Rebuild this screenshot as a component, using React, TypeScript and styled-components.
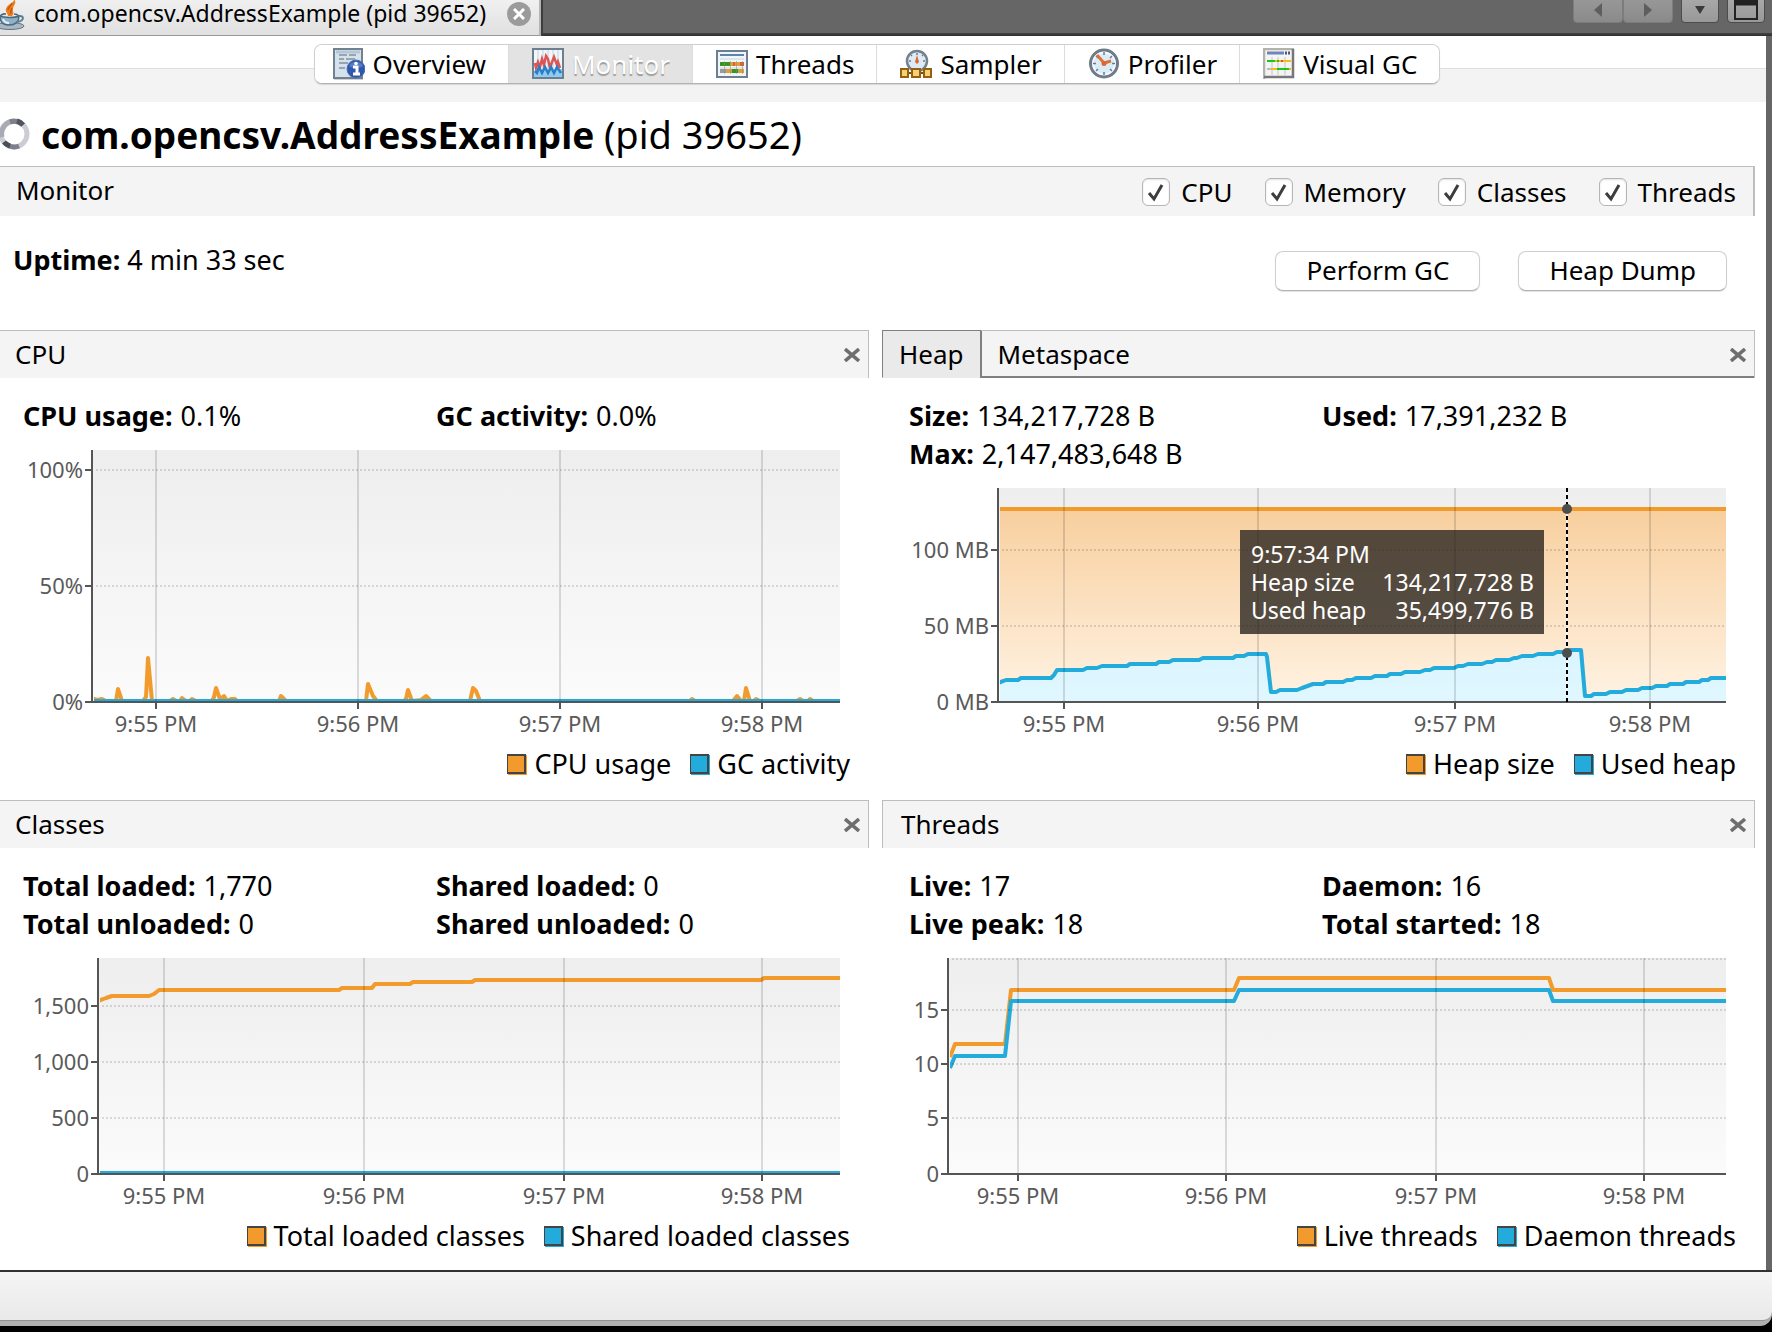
import React, { useId, useLayoutEffect, useRef, useState } from 'react';
import styled, { createGlobalStyle, css } from 'styled-components';

const ORANGE = '#f29b2c';
const BLUE = '#22abdb';
const FONT = '"Noto Sans", "Open Sans", "DejaVu Sans", sans-serif';

const GlobalStyle = createGlobalStyle`
  *, *::before, *::after { box-sizing: border-box; }
  body {
    margin: 0;
    background: #000;
    color: #000;
    font-family: ${FONT};
    font-size: 26px;
    line-height: 36px;
  }
  button, input { font: inherit; color: inherit; margin: 0; }
`;

/* ---------- window frame ---------- */

const Window = styled.div`
  display: flex;
  flex-direction: column;
  min-height: 100vh;
  overflow: hidden;
`;

const DocumentBar = styled.div`
  display: flex;
  justify-content: space-between;
  height: 36px;
  background: linear-gradient(#666 33px, #444 33px, #2e2e2e);
`;

const DocumentTab = styled.div`
  display: flex;
  align-items: center;
  gap: 9px;
  padding: 0 8px 8px 0;
  background: linear-gradient(#f0f0f0, #e0e0e0);
  border-right: 2px solid #b4b4b4;
  border-bottom: 1px solid #999;
  box-shadow: 2px 0 0 #3c3c3c;
  font-size: 23px;
  line-height: 27px;
  white-space: nowrap;

  > svg { margin-left: -8px; }
`;

const TabClose = styled.button`
  display: grid;
  place-items: center;
  width: 24px;
  height: 24px;
  margin-left: 12px;
  padding: 0;
  border: 0;
  border-radius: 50%;
  background: #9b9b9b;
`;

const WindowButtons = styled.div`
  display: flex;
  gap: 8px;
  margin-top: -4px;
  padding-right: 7px;
`;

const ButtonPair = styled.div`
  display: flex;
`;

const FrameButton = styled.button<{ $wide?: boolean }>`
  display: grid;
  place-items: center;
  width: ${p => (p.$wide ? 50 : 38)}px;
  height: 27px;
  padding: 0;
  border: 1px solid ${p => (p.$wide ? '#7c7c7c' : '#4c4c4c')};
  border-radius: 0 0 4px 4px;
  background: ${p => (p.$wide ? 'linear-gradient(#999, #8a8a8a)' : 'linear-gradient(#aaa, #989898)')};
`;

const Content = styled.div`
  flex: 1 0 auto;
  background: #fff;
  border-right: 6px solid #666;
`;

/* ---------- view tabs ---------- */

const TabStrip = styled.nav`
  display: flex;
  justify-content: center;
  height: 66px;
  padding: 8px 0 18px;
  background: linear-gradient(#fff 32px, #dedede 32px, #dedede 33px, #f3f3f3 33px);
`;

const Segments = styled.div`
  display: flex;
  height: 40px;
  margin-right: 12px;
  border: 1px solid #cfcfcf;
  border-bottom-color: #b2b2b2;
  border-radius: 8px;
  background: #fff;
  box-shadow: 0 1px 1px rgba(0, 0, 0, 0.12);
  overflow: hidden;
`;

const Segment = styled.button<{ $active?: boolean }>`
  display: flex;
  align-items: center;
  gap: 8px;
  padding: 0 22px 0 23px;
  border: 0;
  border-right: 1px solid #dcdcdc;
  background: #fff;
  white-space: nowrap;

  &:first-child { padding-left: 18px; }
  &:last-child { padding-right: 22px; border-right: 0; }

  ${p => p.$active && css`
    background: #e3e3e3;
    color: #fff;
    text-shadow: 0 2px 1px #999;
  `}
`;

/* ---------- application view ---------- */

const View = styled.main`
  margin: 0 11px 0 -4px;
  padding-bottom: 16px;
`;

const Heading = styled.h1`
  display: flex;
  align-items: center;
  gap: 11px;
  height: 64px;
  margin: 0;
  padding-left: 2px;
  font-size: 37px;
  line-height: 50px;
  white-space: pre;
`;

const Light = styled.span`
  font-size: 38px;
  font-weight: 400;
`;

const SectionBar = styled.div`
  display: flex;
  align-items: center;
  justify-content: space-between;
  height: 50px;
  padding: 0 17px 0 20px;
  border-top: 1px solid #bdbdbd;
  border-right: 2px solid #bdbdbd;
  background: #f4f4f4;
`;

const BarTitle = styled.h2`
  margin: 0;
  padding-bottom: 3px;
  font-size: 26px;
  font-weight: 400;
  line-height: 36px;
`;

const Checks = styled.div`
  display: flex;
  gap: 32px;
`;

const CheckLabel = styled.label`
  display: flex;
  align-items: center;
  gap: 11px;
`;

const CheckCell = styled.span`
  display: grid;
  place-items: center;

  > * { grid-area: 1 / 1; }
  > svg { pointer-events: none; visibility: hidden; }
  > input:checked + svg { visibility: visible; }
`;

const CheckInput = styled.input`
  appearance: none;
  width: 28px;
  height: 28px;
  border: 1px solid #b5b5b5;
  border-radius: 6px;
  background: #fff;
  box-shadow: inset 0 1px 2px rgba(0, 0, 0, 0.12);
`;

const ActionRow = styled.div`
  display: flex;
  align-items: flex-start;
  justify-content: space-between;
  padding: 25px 28px 39px 17px;
`;

const Fact = styled.div`
  font-size: 27px;
  line-height: 38px;
  white-space: nowrap;
`;

const Actions = styled.div`
  display: flex;
  gap: 38px;
  padding-top: 10px;
`;

const PushButton = styled.button`
  height: 40px;
  padding: 0 30px 2px;
  border: 1px solid #cfcfcf;
  border-bottom-color: #b2b2b2;
  border-radius: 8px;
  background: #fff;
  box-shadow: 0 1px 1px rgba(0, 0, 0, 0.12);
  line-height: 36px;
`;

const PanelGrid = styled.div`
  display: grid;
  grid-template-columns: repeat(2, minmax(0, 1fr));
  gap: 18px 13px;
`;

/* ---------- panels ---------- */

const Panel = styled.section`
  display: flex;
  flex-direction: column;
`;

const PanelHeader = styled.header`
  display: flex;
  align-items: stretch;
  height: 48px;
  border: 1px solid #bdbdbd;
  border-bottom: 0;
  background: #f4f4f4;
`;

const PanelTitle = styled.h2`
  display: flex;
  align-items: center;
  flex: 1;
  margin: 0;
  padding: 0 0 2px 18px;
  font-size: 26px;
  font-weight: 400;
`;

const PanelTab = styled.button<{ $active?: boolean }>`
  padding: 0 16px;
  border: 0;
  border-bottom: 2px solid #808080;
  background: transparent;

  ${p => p.$active && css`
    border-bottom: 0;
    padding-bottom: 2px;
    background: #eaeaea;
    box-shadow: -1px -1px 0 #808080;
    border-right: 2px solid #808080;
  `}
`;

const Filler = styled.div`
  flex: 1;
  border-bottom: 2px solid #808080;
`;

const PanelClose = styled.button<{ $ruled?: boolean }>`
  display: grid;
  place-items: center;
  width: 32px;
  padding: ${p => (p.$ruled ? '3px 0 0' : '1px 0 0')};
  border: 0;
  border-bottom: ${p => (p.$ruled ? '2px solid #808080' : '0')};
  background: transparent;
`;

const Stats = styled.dl`
  display: grid;
  grid-template-columns: repeat(2, minmax(0, 1fr));
  margin: 0;
  padding: 19px 20px 15px 27px;
  font-size: 27px;
  line-height: 38px;
`;

const Stat = styled.div`
  display: flex;
  gap: 8px;
  white-space: nowrap;

  dt { font-weight: 700; }
  dd { margin: 0; }
`;

const ChartBox = styled.div`
  position: relative;
  margin-right: 29px;

  > svg { display: block; width: 100%; overflow: visible; }
  text { font-size: 22px; fill: #5a5a5a; }
`;

const Tooltip = styled.div`
  position: absolute;
  width: 304px;
  padding: 10px 10px 10px 11px;
  background: rgba(32, 28, 24, 0.76);
  color: #fff;
  font-size: 23px;
  line-height: 28px;
`;

const TooltipRow = styled.div`
  display: flex;
  justify-content: space-between;
`;

const Legend = styled.ul`
  display: flex;
  justify-content: flex-end;
  gap: 19px;
  margin: 0;
  padding: 8px 19px 0 0;
  font-size: 27px;
  list-style: none;
`;

const LegendItem = styled.li`
  display: flex;
  align-items: center;
  gap: 8px;
`;

const Swatch = styled.span<{ $color: string }>`
  width: 19px;
  height: 20px;
  border: 2px solid #444;
  border-left-width: 1px;
  background: ${p => p.$color};
  box-shadow: 1px 1px 0 ${p => p.$color};
`;

/* ---------- status bar ---------- */

const StatusShell = styled.footer`
  height: 56px;
  margin-bottom: 6px;
  border-top: 2px solid #333;
  border-radius: 0 0 12px 0;
  background: linear-gradient(#666 40px, #b0b0b0 40px);
`;

const StatusBar = styled.div`
  height: 49px;
  border-bottom: 1px solid #909090;
  border-radius: 0 0 9px 0;
  background: linear-gradient(#f5f5f5, #e9e9e9);
`;

/* ---------- charts ---------- */

type Point = [number, number];

interface ChartSpec {
  axis: number;
  span: number;
  height: number;
  yTicks: [string, number][];
  xTicks: number[];
  series: { color: string; points: Point[]; area?: [string, string] }[];
  marker?: { x: number; ys: number[] };
}

const TIMES = ['9:55 PM', '9:56 PM', '9:57 PM', '9:58 PM'];

function Chart({ spec, label, children }: {
  spec: ChartSpec;
  label: string;
  children?: (markerX: number) => React.ReactNode;
}) {
  const box = useRef<HTMLDivElement>(null);
  const [width, setWidth] = useState(spec.axis + spec.span);
  const id = useId().replace(/:/g, '');

  useLayoutEffect(() => {
    const el = box.current;
    if (!el) return;
    const update = () => setWidth(el.clientWidth);
    update();
    const observer = new ResizeObserver(update);
    observer.observe(el);
    return () => observer.disconnect();
  }, []);

  const { axis, span, height: h } = spec;
  const x = (v: number) => axis + (v * (width - axis)) / span;
  const trace = (pts: Point[]) => pts.map(([px, py]) => `${x(px)},${py}`).join(' ');

  return (
    <ChartBox ref={box}>
      <svg height={h + 36} role="img" aria-label={label}>
        <defs>
          <linearGradient id={`${id}bg`} x1="0" y1="0" x2="0" y2="1">
            <stop offset="0" stopColor="#eee" />
            <stop offset="1" stopColor="#fbfbfb" />
          </linearGradient>
          {spec.series.map((s, i) => s.area && (
            <linearGradient key={i} id={`${id}a${i}`} gradientUnits="userSpaceOnUse" x1="0" y1="0" x2="0" y2={h}>
              <stop offset="0" stopColor={s.area[0]} />
              <stop offset="1" stopColor={s.area[1]} />
            </linearGradient>
          ))}
          <clipPath id={`${id}c`}>
            <rect x={axis + 2} y="0" width={Math.max(0, width - axis - 2)} height={h} />
          </clipPath>
        </defs>
        <rect x={axis} y="0" width={Math.max(0, width - axis)} height={h} fill={`url(#${id}bg)`} />
        <g clipPath={`url(#${id}c)`}>
          {spec.series.map((s, i) => (
            <g key={i}>
              {s.area && (
                <polygon
                  points={`${x(s.points[0][0])},${h} ${trace(s.points)} ${x(span)},${h}`}
                  fill={`url(#${id}a${i})`}
                />
              )}
              <polyline points={trace(s.points)} fill="none" stroke={s.color} strokeWidth="4" strokeLinejoin="round" />
            </g>
          ))}
          {spec.yTicks.filter(([, y]) => y < h).map(([name, y]) => (
            <line key={name} x1={axis} x2={width} y1={y} y2={y} stroke="#000" strokeOpacity="0.13" strokeWidth="2" strokeDasharray="2 2" />
          ))}
          {spec.xTicks.map(t => (
            <line key={t} x1={x(t)} x2={x(t)} y1="0" y2={h} stroke="#000" strokeOpacity="0.13" strokeWidth="2" />
          ))}
        </g>
        <path d={`M${axis} 0V${h}H${width}`} fill="none" stroke="#555" strokeWidth="2" />
        {spec.yTicks.filter(([name]) => name.trim()).map(([name, y]) => (
          <g key={name}>
            <line x1={axis - 7} x2={axis} y1={y} y2={y} stroke="#555" strokeWidth="2" />
            <text x={axis - 9} y={y + 8} textAnchor="end">{name}</text>
          </g>
        ))}
        {spec.xTicks.map((t, i) => (
          <g key={t}>
            <line x1={x(t)} x2={x(t)} y1={h} y2={h + 7} stroke="#555" strokeWidth="2" />
            <text x={x(t)} y={h + 30} textAnchor="middle">{TIMES[i]}</text>
          </g>
        ))}
        {spec.marker && (
          <g>
            <line x1={x(spec.marker.x)} x2={x(spec.marker.x)} y1="0" y2={h} stroke="#fff" strokeWidth="2" strokeOpacity="0.7" />
            <line x1={x(spec.marker.x)} x2={x(spec.marker.x)} y1="0" y2={h} stroke="#000" strokeWidth="2" strokeDasharray="4 3" />
            {spec.marker.ys.map(y => (
              <circle key={y} cx={x(spec.marker!.x)} cy={y} r="5" fill="#4d4d4d" />
            ))}
          </g>
        )}
      </svg>
      {spec.marker && children?.(x(spec.marker.x))}
    </ChartBox>
  );
}

/* Each spike is drawn from [offset, height above the base line]. */
const cpuSpikes: Point[] = [
  [0, 0], [2, 2], [5, 1], [10, 2], [14, 0], [24, 0], [26, 12], [30, 0], [51, 0], [54, 4], [56, 43], [60, 0],
  [78, 0], [81, 2], [84, 0], [88, 0], [90, 3], [94, 0], [98, 0], [100, 2], [104, 0], [120, 0], [122, 4],
  [124, 13], [128, 2], [132, 5], [135, 0], [139, 2], [143, 2], [145, 0], [187, 0], [189, 5], [194, 0],
  [274, 0], [276, 17], [281, 5], [285, 0], [312, 0], [314, 2], [316, 11], [320, 0], [329, 1], [334, 5],
  [339, 0], [378, 0], [381, 13], [384, 10], [388, 0], [598, 0], [600, 2], [603, 0], [641, 0], [645, 5],
  [649, 0], [652, 0], [654, 13], [658, 0], [662, 0], [664, 2], [668, 0], [705, 0], [708, 2], [711, 0],
  [716, 0], [718, 2], [721, 0], [748, 0],
];

const cpuChart: ChartSpec = {
  axis: 96, span: 748, height: 252,
  yTicks: [['100%', 20], ['50%', 136], ['0%', 252]],
  xTicks: [64, 266, 468, 670],
  series: [
    { color: ORANGE, points: cpuSpikes.map(([px, v]): Point => [px, 251 - v]) },
    { color: BLUE, points: [[0, 251], [748, 251]] },
  ],
};

const heapChart: ChartSpec = {
  axis: 116, span: 728, height: 214,
  yTicks: [['100 MB', 62], ['50 MB', 138], ['0 MB', 214]],
  xTicks: [66, 260, 457, 652],
  series: [
    { color: ORANGE, area: ['#f7cb96', '#fff3e4'], points: [[0, 21], [728, 21]] },
    {
      color: BLUE, area: ['#c8edfb', '#e0f7ff'],
      points: [
        [0, 195], [8, 192], [20, 192], [23, 190], [53, 190], [56, 187], [59, 182], [85, 182], [89, 180],
        [99, 180], [104, 178], [129, 178], [132, 176], [158, 176], [161, 174], [171, 174], [175, 172],
        [201, 172], [205, 170], [235, 170], [238, 168], [246, 168], [250, 166], [268, 166], [269, 169],
        [273, 204], [278, 204], [282, 202], [299, 202], [304, 200], [315, 196], [325, 196], [328, 194],
        [345, 194], [349, 192], [354, 192], [358, 190], [373, 190], [377, 188], [389, 188], [392, 186],
        [403, 186], [407, 184], [422, 184], [427, 182], [432, 182], [436, 180], [456, 180], [460, 178],
        [465, 178], [470, 176], [484, 176], [489, 174], [494, 174], [498, 172], [511, 172], [516, 170],
        [519, 170], [524, 168], [535, 168], [540, 166], [555, 166], [559, 164], [568, 164], [572, 162],
        [583, 162], [587, 208], [593, 208], [596, 206], [608, 206], [612, 204], [624, 204], [628, 202],
        [640, 202], [644, 200], [654, 200], [658, 198], [669, 198], [672, 196], [685, 196], [688, 194],
        [701, 194], [704, 192], [710, 192], [713, 190], [728, 190],
      ],
    },
  ],
  marker: { x: 569, ys: [21, 165] },
};

const classesChart: ChartSpec = {
  axis: 102, span: 742, height: 216,
  yTicks: [['1,500', 48], ['1,000', 104], ['500', 160], ['0', 216]],
  xTicks: [66, 266, 466, 664],
  series: [
    {
      color: ORANGE,
      points: [
        [0, 43], [8, 40], [14, 38], [51, 38], [56, 36], [61, 32], [241, 32], [244, 30], [274, 30], [277, 26],
        [312, 26], [315, 24], [374, 24], [377, 22], [663, 22], [666, 20], [742, 20],
      ],
    },
    { color: BLUE, points: [[0, 215], [742, 215]] },
  ],
};

const threadsChart: ChartSpec = {
  axis: 66, span: 778, height: 216,
  yTicks: [[' ', 1], ['15', 52], ['10', 106], ['5', 160], ['0', 216]],
  xTicks: [70, 278, 488, 696],
  series: [
    {
      color: ORANGE,
      points: [[2, 99], [7, 86], [57, 86], [63, 32], [286, 32], [291, 20], [601, 20], [605, 32], [778, 32]],
    },
    {
      color: BLUE,
      points: [[2, 110], [7, 98], [57, 98], [63, 43], [286, 43], [291, 32], [601, 32], [605, 43], [778, 43]],
    },
  ],
};

/* ---------- icons ---------- */

const JavaIcon = () => (
  <svg width="33" height="32" viewBox="0 0 33 32" aria-hidden="true">
    <path d="M22 1c1 4-7 5-8 10-1 3 2 4 2 7h4c3-3 0-5 1-8 1-3 4-5 1-9z" fill="#ee7d1a" />
    <path d="M20 5c-1 3-4 4-4 7M20 10c-1 2-2 3-1 6" stroke="#c9560a" strokeWidth="1.500" fill="none" />
    <ellipse cx="18" cy="28" rx="14" ry="3.500" fill="#a9b8c4" stroke="#5f7485" />
    <path d="M8 18c0 7 3 9 9 9s10-2 10-9c-4 2-15 2-19 0z" fill="#8fb0c6" stroke="#4d687b" strokeWidth="1.500" />
    <path d="M11 21c1 3 3 4 6 4" stroke="#e4f0f7" strokeWidth="2" fill="none" />
    <path d="M27 18c5-1 6 5-2 6" stroke="#5c7c92" strokeWidth="2" fill="none" />
    <path d="M8 18c3-3 5-2 6-2M22 16c3 0 4 1 5 2" stroke="#4d687b" strokeWidth="1.500" fill="none" />
  </svg>
);

const OverviewIcon = () => (
  <svg width="32" height="32" viewBox="0 0 32 32" aria-hidden="true">
    <path d="M1 31.500h29" stroke="#d0d0d0" />
    <rect x="1" y="1" width="28" height="29" fill="#d5e2ed" stroke="#71818f" strokeWidth="2" />
    <path d="M3 4h24" stroke="#b4c6d6" strokeWidth="3" />
    <path d="M6 7h8M16 7h7M6 11h5M13 11h9M6 15h9M6 20h6" stroke="#97a5b1" strokeWidth="2" />
    <circle cx="23" cy="21" r="9" fill="#2f57ac" stroke="#4a6dbb" />
    <path d="M16 18a8 8 0 0 1 14 0c-4 3-10 3-14 0z" fill="#6f93d6" opacity=".6" />
    <path d="M20 19h4v7M20 26h7" stroke="#fff" strokeWidth="3" fill="none" />
    <circle cx="23" cy="15.500" r="1.800" fill="#fff" />
  </svg>
);

const MonitorIcon = () => (
  <svg width="32" height="32" viewBox="0 0 32 32" aria-hidden="true">
    <rect x="1" y="1" width="30" height="29" fill="#f2f6f9" stroke="#6c7f90" strokeWidth="2" />
    <path d="M6 2v27M11 2v27M16 2v27M21 2v27M26 2v27" stroke="#c4d2de" />
    <path d="M2 29v-6l3 1 2-4 3 5 3-7 3 6 3-7 3 7 3-3 5 0v8z" fill="#8fcbf2" />
    <path d="M3 15l1 5 2-6 2 5 2-8 2 6 2-9 2 3 2 9 2-6 2-5 3 8 1-3 2 6" stroke="#dc5656" strokeWidth="2.500" fill="none" />
    <path d="M3 23l2 2 2-6 3 6 3-6 3 6 3-6 3 6 3-6 4 6" stroke="#2b7fc4" strokeWidth="2.500" fill="none" />
  </svg>
);

const ThreadsIcon = () => (
  <svg width="32" height="32" viewBox="0 0 32 32" aria-hidden="true">
    <rect x="1" y="3" width="30" height="26" fill="#f1f5f8" stroke="#6c7f90" strokeWidth="2" />
    <path d="M4 7h24" stroke="#5d86ad" strokeWidth="2" />
    <path d="M4 11h24M4 20h24" stroke="#dde5ec" strokeWidth="2" />
    <path d="M4 16h14" stroke="#3a9422" strokeWidth="4" />
    <path d="M14 16h3M19 16h5" stroke="#d9a23c" strokeWidth="4" />
    <path d="M17 16h2M24 16h4" stroke="#d8603a" strokeWidth="4" />
    <path d="M4 23h6" stroke="#9a9a9a" strokeWidth="4" />
    <path d="M10 23h6M22 23h6" stroke="#d9a23c" strokeWidth="4" />
    <path d="M16 23h6" stroke="#3a9422" strokeWidth="4" />
    <path d="M8.500 13v13M14.500 13v13M20.500 13v13M26.500 13v13" stroke="#8b8b74" strokeOpacity=".5" />
  </svg>
);

const SamplerIcon = () => (
  <svg width="32" height="32" viewBox="0 0 32 32" aria-hidden="true">
    <circle cx="17" cy="13" r="10" fill="#dcebf5" stroke="#75828e" strokeWidth="2.500" />
    <path d="M17 5v2M9 13h2M23 13h2M11 7l1 1M23 7l-1 1" stroke="#6d7a86" strokeWidth="1.500" />
    <path d="M17 7l2 7-2 2-2-2z" fill="#e0662f" />
    <path d="M7 25h18" stroke="#7a4f10" strokeWidth="2" />
    <g fill="#f6cf77" stroke="#94610f" strokeWidth="2">
      <rect x="1" y="21" width="7" height="8" />
      <rect x="12" y="21" width="8" height="8" />
      <rect x="24" y="21" width="7" height="8" />
    </g>
  </svg>
);

const ProfilerIcon = () => (
  <svg width="32" height="32" viewBox="0 0 32 32" aria-hidden="true">
    <circle cx="16" cy="15.500" r="13.500" fill="#dcebf8" stroke="#6e7b89" strokeWidth="3" />
    <circle cx="16" cy="15.500" r="11" fill="none" stroke="#fff" strokeWidth="1.500" opacity=".8" />
    <path d="M16 4v3M16 24v3M5 15.500h3M24 15.500h3M8 8l2 2M24 8l-2 2M8 23l2-2M24 23l-2-2" stroke="#6b7c8e" strokeWidth="1.500" />
    <path d="M9 7l7 8 7-2" stroke="#e0703a" strokeWidth="3" fill="none" />
    <circle cx="16" cy="15.500" r="2.500" fill="#e0662f" />
  </svg>
);

const VisualGcIcon = () => (
  <svg width="32" height="32" viewBox="0 0 32 32" aria-hidden="true">
    <rect x="1" y="1" width="30" height="29" fill="#f4f4f4" />
    <path d="M1 31V1h30" stroke="#b3b3a9" strokeWidth="2.500" fill="none" />
    <path d="M1 29h29V1" stroke="#777" strokeWidth="2.500" fill="none" />
    <path d="M4 5h17" stroke="#6c86bd" strokeWidth="3" />
    <path d="M22 5h6" stroke="#4c5a75" strokeWidth="3" strokeDasharray="2 1" />
    <path d="M9 9v18M15 9v18M22 9v18" stroke="#d6d6d6" strokeWidth="1.500" />
    <path d="M4 13h12" stroke="#1ec41e" strokeWidth="2" />
    <path d="M12 13h2M16 13h2M20 13h8" stroke="#f5bd16" strokeWidth="2" />
    <path d="M18 13h2" stroke="#e3502a" strokeWidth="2" />
    <path d="M4 21h4" stroke="#bbb" strokeWidth="2" />
    <path d="M8 21h6M26 21h2" stroke="#f5bd16" strokeWidth="2" />
    <path d="M14 21h12" stroke="#1ec41e" strokeWidth="2" />
  </svg>
);

const Spinner = () => (
  <svg width="32" height="32" viewBox="0 0 32 32" aria-hidden="true" fill="none" strokeWidth="5">
    <circle cx="16" cy="16" r="13" stroke="#cbccd4" />
    <path d="M4 19a13 13 0 0 1 12-16" stroke="#a9aab4" />
    <path d="M12 4a13 13 0 0 1 13 3" stroke="#7d7f8a" />
    <path d="M19 3a13 13 0 0 1 6 4" stroke="#52545f" />
    <path d="M21 28a13 13 0 0 1-14-3" stroke="#7d7f8a" />
    <path d="M12 28a13 13 0 0 1-6-4" stroke="#4b4d58" />
  </svg>
);

const CheckMark = () => (
  <svg width="20" height="20" viewBox="0 0 20 20" aria-hidden="true">
    <path d="M3 11l5 6 8-14" fill="none" stroke="#3d3d3d" strokeWidth="3" />
  </svg>
);

const CrossIcon = () => (
  <svg width="16" height="14" viewBox="0 0 16 14" aria-hidden="true">
    <path d="M1 1l14 12M15 1L1 13" stroke="#6e6e6e" strokeWidth="3.500" />
  </svg>
);

/* ---------- composed parts ---------- */

const views = [
  { name: 'Overview', Icon: OverviewIcon },
  { name: 'Monitor', Icon: MonitorIcon },
  { name: 'Threads', Icon: ThreadsIcon },
  { name: 'Sampler', Icon: SamplerIcon },
  { name: 'Profiler', Icon: ProfilerIcon },
  { name: 'Visual GC', Icon: VisualGcIcon },
];

interface MetricPanelProps {
  title: string;
  tabs?: string[];
  stats: [string, string][];
  legend: [string, string];
  spec: ChartSpec;
  children?: (markerX: number) => React.ReactNode;
}

function MetricPanel({ title, tabs, stats, legend, spec, children }: MetricPanelProps) {
  return (
    <Panel aria-label={title}>
      <PanelHeader>
        {tabs ? (
          <>
            {tabs.map((t, i) => <PanelTab key={t} type="button" $active={i === 0}>{t}</PanelTab>)}
            <Filler />
          </>
        ) : <PanelTitle>{title}</PanelTitle>}
        <PanelClose type="button" aria-label={`Close ${title}`} $ruled={!!tabs}><CrossIcon /></PanelClose>
      </PanelHeader>
      <Stats>
        {stats.map(([name, value]) => (
          <Stat key={name}><dt>{name}:</dt><dd>{value}</dd></Stat>
        ))}
      </Stats>
      <Chart spec={spec} label={`${title} chart`}>{children}</Chart>
      <Legend>
        <LegendItem><Swatch $color={ORANGE} />{legend[0]}</LegendItem>
        <LegendItem><Swatch $color={BLUE} />{legend[1]}</LegendItem>
      </Legend>
    </Panel>
  );
}

export default function App() {
  return (
    <Window>
      <GlobalStyle />
      <DocumentBar>
        <DocumentTab>
          <JavaIcon />
          <span>com.opencsv.AddressExample (pid 39652)</span>
          <TabClose type="button" aria-label="Close tab">
            <svg width="12" height="12" viewBox="0 0 12 12" aria-hidden="true">
              <path d="M1 1l10 10M11 1L1 11" stroke="#fff" strokeWidth="3" />
            </svg>
          </TabClose>
        </DocumentTab>
        <WindowButtons>
          <ButtonPair>
            <FrameButton type="button" $wide aria-label="Previous">
              <svg width="8" height="14" viewBox="0 0 8 14"><path d="M8 0v14L0 7z" fill="#5e5e5e" /></svg>
            </FrameButton>
            <FrameButton type="button" $wide aria-label="Next">
              <svg width="8" height="14" viewBox="0 0 8 14"><path d="M0 0v14l8-7z" fill="#5e5e5e" /></svg>
            </FrameButton>
          </ButtonPair>
          <FrameButton type="button" aria-label="Show list">
            <svg width="10" height="8" viewBox="0 0 10 8"><path d="M0 0h10L5 8z" fill="#3a3a3a" /></svg>
          </FrameButton>
          <FrameButton type="button" aria-label="Maximize">
            <svg width="24" height="20" viewBox="0 0 24 20">
              <rect x="1" y="1" width="22" height="18" fill="none" stroke="#222" strokeWidth="2" />
              <path d="M0 3h24" stroke="#222" strokeWidth="5" />
            </svg>
          </FrameButton>
        </WindowButtons>
      </DocumentBar>
      <Content>
        <TabStrip aria-label="Views">
          <Segments>
            {views.map(({ name, Icon }) => (
              <Segment key={name} type="button" $active={name === 'Monitor'}>
                <Icon />{name}
              </Segment>
            ))}
          </Segments>
        </TabStrip>
        <View>
          <Heading>
            <Spinner />
            <span>com.opencsv.AddressExample <Light>(pid 39652)</Light></span>
          </Heading>
          <SectionBar>
            <BarTitle>Monitor</BarTitle>
            <Checks>
              {['CPU', 'Memory', 'Classes', 'Threads'].map(name => (
                <CheckLabel key={name}>
                  <CheckCell><CheckInput type="checkbox" defaultChecked /><CheckMark /></CheckCell>
                  {name}
                </CheckLabel>
              ))}
            </Checks>
          </SectionBar>
          <ActionRow>
            <Fact><b>Uptime:</b> 4 min 33 sec</Fact>
            <Actions>
              <PushButton type="button">Perform GC</PushButton>
              <PushButton type="button">Heap Dump</PushButton>
            </Actions>
          </ActionRow>
          <PanelGrid>
            <MetricPanel
              title="CPU"
              stats={[['CPU usage', '0.1%'], ['GC activity', '0.0%']]}
              legend={['CPU usage', 'GC activity']}
              spec={cpuChart}
            />
            <MetricPanel
              title="Heap"
              tabs={['Heap', 'Metaspace']}
              stats={[['Size', '134,217,728 B'], ['Used', '17,391,232 B'], ['Max', '2,147,483,648 B']]}
              legend={['Heap size', 'Used heap']}
              spec={heapChart}
            >
              {markerX => (
                <Tooltip style={{ left: markerX - 327, top: 42 }}>
                  <div>9:57:34 PM</div>
                  <TooltipRow><span>Heap size</span><span>134,217,728 B</span></TooltipRow>
                  <TooltipRow><span>Used heap</span><span>35,499,776 B</span></TooltipRow>
                </Tooltip>
              )}
            </MetricPanel>
            <MetricPanel
              title="Classes"
              stats={[['Total loaded', '1,770'], ['Shared loaded', '0'], ['Total unloaded', '0'], ['Shared unloaded', '0']]}
              legend={['Total loaded classes', 'Shared loaded classes']}
              spec={classesChart}
            />
            <MetricPanel
              title="Threads"
              stats={[['Live', '17'], ['Daemon', '16'], ['Live peak', '18'], ['Total started', '18']]}
              legend={['Live threads', 'Daemon threads']}
              spec={threadsChart}
            />
          </PanelGrid>
        </View>
      </Content>
      <StatusShell>
        <StatusBar />
      </StatusShell>
    </Window>
  );
}
